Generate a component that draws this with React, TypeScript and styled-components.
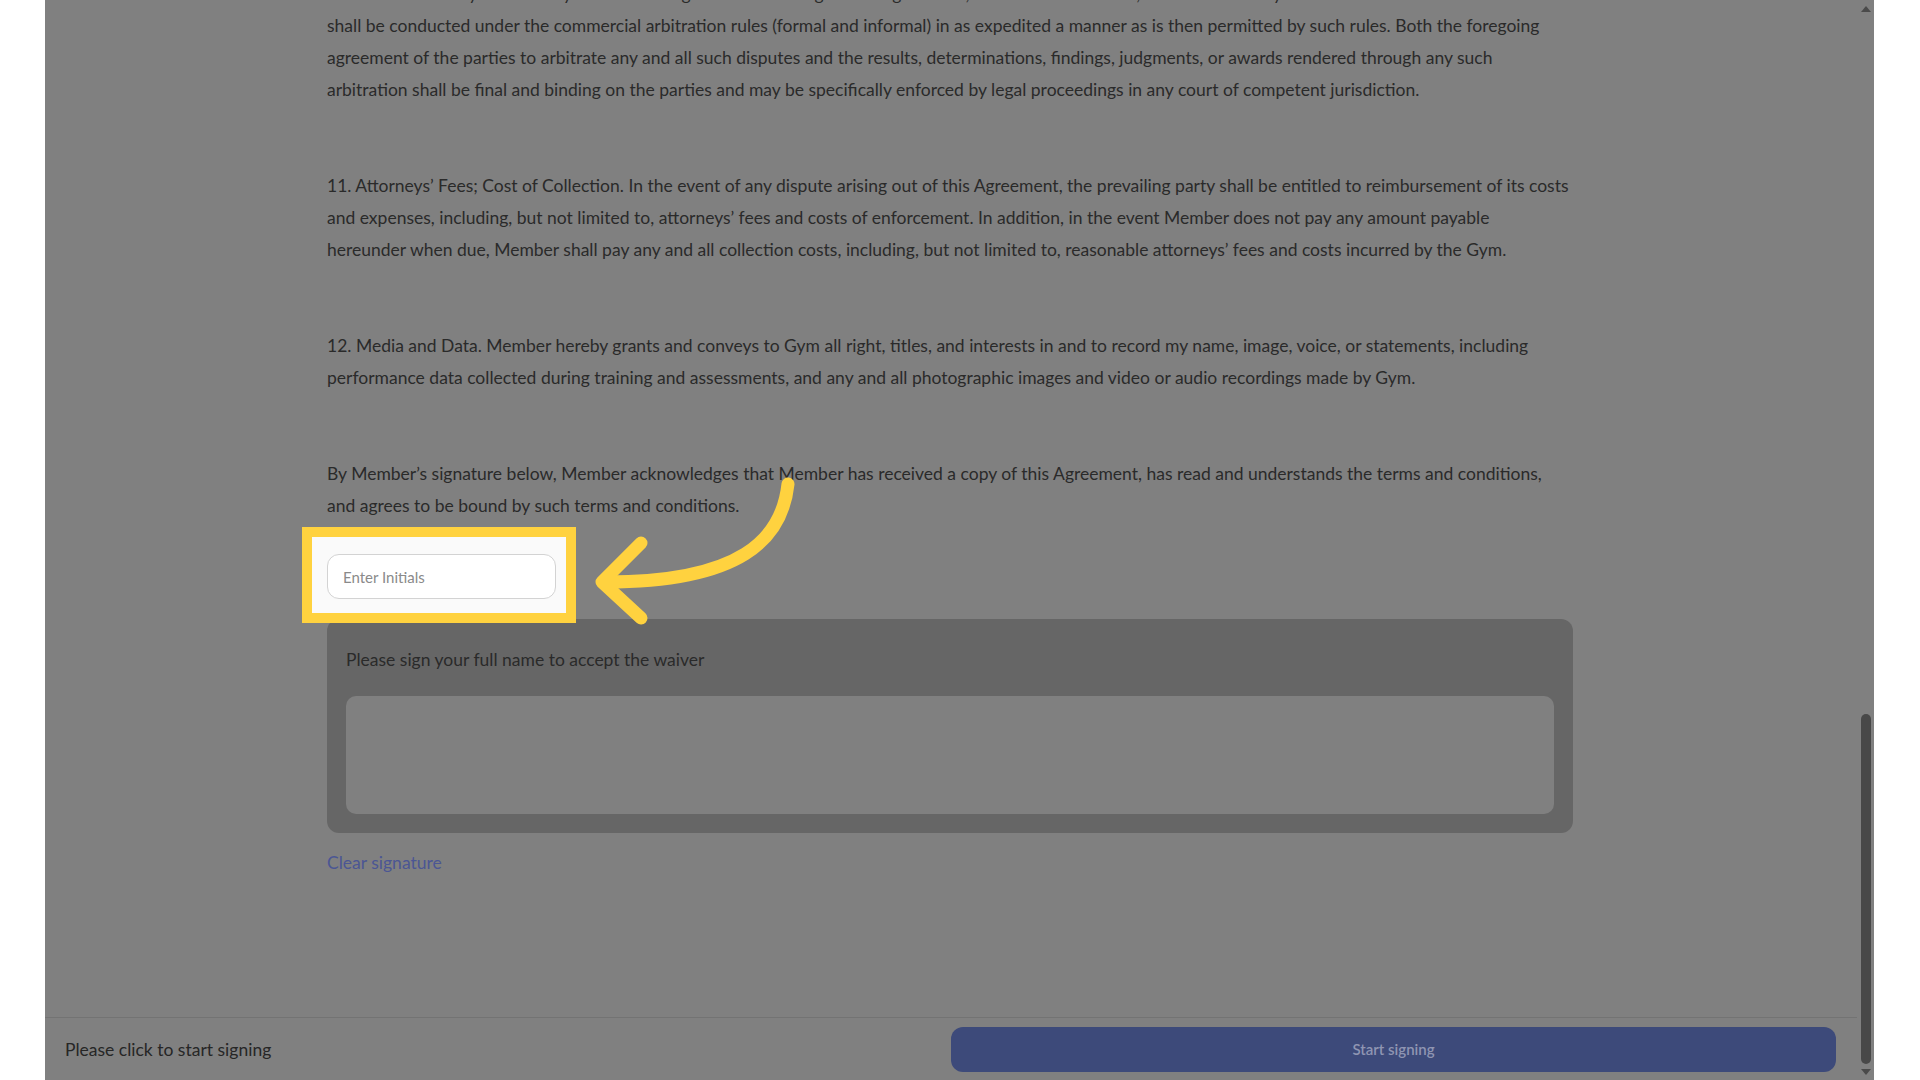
import { createGlobalStyle, styled } from 'styled-components'

const GlobalStyle = createGlobalStyle`
    html, body {
        margin: 0;
        padding: 0;
        background: #ffffff;
        overflow: hidden;
    }
    * { box-sizing: border-box; }
`

const Frame = styled.div`
    margin-left: 45px;
    width: 1829px;
    height: 100vh;
    background: #808080;
    display: flex;
    font-family: Lato, "Liberation Sans", sans-serif;
`

const MainCol = styled.div`
    flex: 1;
    display: flex;
    flex-direction: column;
    min-width: 0;
`

const Scroller = styled.div`
    flex: 1;
    overflow: hidden;
    padding-left: 282px;
`

const Doc = styled.div`
    width: 1246px;
    margin-top: -22px;
    color: #2a2a2a;
    font-size: 17.5px;
`

const Para = styled.p<{ $last?: boolean }>`
    margin: 0 0 ${p => (p.$last ? '0' : '64px')};
    line-height: 32px;
`

const Line = styled.span`
    display: block;
    white-space: nowrap;
`

const Highlight = styled.div`
    position: relative;
    z-index: 2;
    width: 229px;
    margin-top: 32px;

    &::before {
        content: '';
        position: absolute;
        top: -27px;
        left: -25px;
        right: -20px;
        bottom: -24px;
        border: 10px solid #ffd23f;
        background: #fafafa;
    }
`

const InitialsInput = styled.input`
    position: relative;
    display: block;
    width: 229px;
    height: 45px;
    border: 1px solid #d3d3d3;
    border-radius: 12px;
    background: #ffffff;
    padding: 0 15px;
    font-family: Lato, "Liberation Sans", sans-serif;
    font-size: 15px;
    outline: none;

    &::placeholder {
        color: #8a8a8a;
    }
`

const Arrow = styled.svg`
    position: absolute;
    left: 250px;
    top: -88px;
    overflow: visible;
`

const SignPanel = styled.div`
    margin-top: 20px;
    background: #666666;
    border-radius: 12px;
    padding: 29px 19px 19px;
`

const SignLabel = styled.div`
    font-size: 17.5px;
    line-height: 24px;
    color: #2a2a2a;
    margin-bottom: 24px;
`

const SignPad = styled.div`
    height: 118px;
    background: #808080;
    border-radius: 10px;
`

const ClearLink = styled.div`
    margin-top: 18px;
    font-size: 17.5px;
    line-height: 24px;
    color: #4b5694;
`

const Footer = styled.div`
    height: 63px;
    border-top: 1px solid #737373;
    display: flex;
    align-items: center;
    justify-content: space-between;
    padding: 0 21px 0 20px;
`

const FooterText = styled.div`
    font-size: 17.5px;
    color: #262626;
`

const StartButton = styled.button`
    width: 885px;
    height: 45px;
    border: none;
    border-radius: 12px;
    background: #3d4a7a;
    color: #8f95b2;
    font-family: Lato, "Liberation Sans", sans-serif;
    font-size: 15px;
    font-weight: 600;
`

const ScrollBar = styled.div`
    width: 17px;
    display: flex;
    flex-direction: column;
    align-items: center;
    padding: 6px 0 5px;
`

const ScrollArrow = styled.div<{ $down?: boolean }>`
    width: 0;
    height: 0;
    border-left: 5px solid transparent;
    border-right: 5px solid transparent;
    ${p => (p.$down ? 'border-top: 6px solid #4a4a4a;' : 'border-bottom: 6px solid #4a4a4a;')}
`

const Track = styled.div`
    flex: 1;
    display: flex;
    flex-direction: column;
    justify-content: flex-end;
    padding-bottom: 5px;
`

const Thumb = styled.div`
    width: 10px;
    height: 350px;
    border-radius: 5px;
    background: #484848;
`

const paragraphs: string[][] = [
    [
        '10. Arbitration. Any controversy or claim arising out of or relating to this Agreement, or the breach thereof, shall be settled by arbitration which arbitration',
        'shall be conducted under the commercial arbitration rules (formal and informal) in as expedited a manner as is then permitted by such rules. Both the foregoing',
        'agreement of the parties to arbitrate any and all such disputes and the results, determinations, findings, judgments, or awards rendered through any such',
        'arbitration shall be final and binding on the parties and may be specifically enforced by legal proceedings in any court of competent jurisdiction.',
    ],
    [
        '11. Attorneys’ Fees; Cost of Collection. In the event of any dispute arising out of this Agreement, the prevailing party shall be entitled to reimbursement of its costs',
        'and expenses, including, but not limited to, attorneys’ fees and costs of enforcement. In addition, in the event Member does not pay any amount payable',
        'hereunder when due, Member shall pay any and all collection costs, including, but not limited to, reasonable attorneys’ fees and costs incurred by the Gym.',
    ],
    [
        '12. Media and Data. Member hereby grants and conveys to Gym all right, titles, and interests in and to record my name, image, voice, or statements, including',
        'performance data collected during training and assessments, and any and all photographic images and video or audio recordings made by Gym.',
    ],
    [
        'By Member’s signature below, Member acknowledges that Member has received a copy of this Agreement, has read and understands the terms and conditions,',
        'and agrees to be bound by such terms and conditions.',
    ],
]

export default function App() {
    return (
        <>
            <GlobalStyle />
            <Frame>
                <MainCol>
                    <Scroller>
                        <Doc>
                            {paragraphs.map((lines, i) => (
                                <Para key={i} $last={i === paragraphs.length - 1}>
                                    {lines.map((l, j) => (
                                        <Line key={j}>{l}</Line>
                                    ))}
                                </Para>
                            ))}

                            <Highlight>
                                <InitialsInput placeholder="Enter Initials" />
                                <Arrow width="230" height="175" viewBox="0 0 230 175">
                                    <path
                                        d="M 211 18 C 205 74, 163 116, 29 116"
                                        fill="none"
                                        stroke="#ffd23f"
                                        strokeWidth="13"
                                        strokeLinecap="round"
                                    />
                                    <path
                                        d="M 64 77 L 25 116 L 64 152"
                                        fill="none"
                                        stroke="#ffd23f"
                                        strokeWidth="13"
                                        strokeLinecap="round"
                                        strokeLinejoin="round"
                                    />
                                </Arrow>
                            </Highlight>

                            <SignPanel>
                                <SignLabel>Please sign your full name to accept the waiver</SignLabel>
                                <SignPad />
                            </SignPanel>
                            <ClearLink>Clear signature</ClearLink>
                        </Doc>
                    </Scroller>
                    <Footer>
                        <FooterText>Please click to start signing</FooterText>
                        <StartButton>Start signing</StartButton>
                    </Footer>
                </MainCol>
                <ScrollBar>
                    <ScrollArrow />
                    <Track>
                        <Thumb />
                    </Track>
                    <ScrollArrow $down />
                </ScrollBar>
            </Frame>
        </>
    )
}
